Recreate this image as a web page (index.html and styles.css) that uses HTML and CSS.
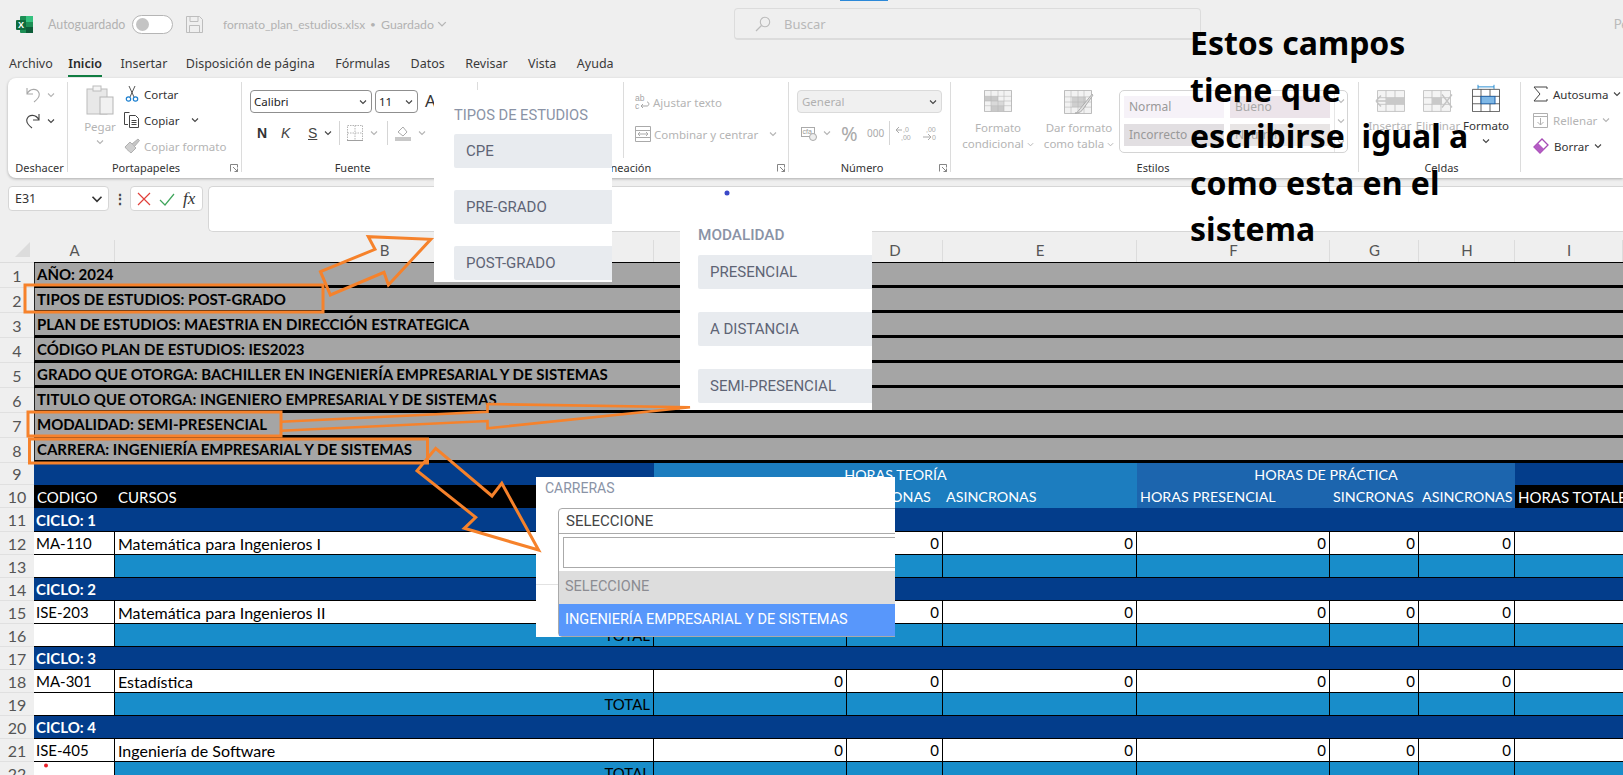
FILE: index.html
```html
<!DOCTYPE html>
<html lang="es">
<head>
<meta charset="utf-8">
<title>formato_plan_estudios.xlsx</title>
<link rel="stylesheet" href="styles.css">
</head>
<body>
<svg class="defs" width="0" height="0">
  <symbol id="chev" viewBox="0 0 8 8"><polyline points="1,2.5 4,5.5 7,2.5" fill="none" stroke="currentColor" stroke-width="1.1"/></symbol>
  <symbol id="launch" viewBox="0 0 8 8"><path d="M.5 7.5V.5h7v3M3 3l4.5 4.5M7.5 4.5v3h-3" fill="none" stroke="currentColor" stroke-width=".9"/></symbol>
</svg>

<header class="titlebar">
  <svg class="xl" width="17" height="17" viewBox="0 0 17 17"><rect x="4" y="0" width="13" height="17" rx="1" fill="#1d8f55"/><rect x="10" y="0" width="7" height="6" fill="#35c27f"/><rect x="10" y="11" width="7" height="6" fill="#0d5c38"/><rect x="0" y="4" width="10" height="10" rx="1" fill="#0f6b3c"/><text x="5" y="12" font-size="9" font-weight="700" text-anchor="middle" fill="#fff" font-family="Liberation Sans">X</text></svg>
  <span class="t-auto">Autoguardado</span>
  <span class="toggle"><span class="knob"></span></span>
  <svg class="save" width="17" height="17" viewBox="0 0 17 17"><path d="M.5.5h13l3 3v13H.5zM4 .5v5h8v-5M3.5 16.5v-7h10v7" fill="none" stroke="#bdbdbd"/></svg>
  <span class="t-file">formato_plan_estudios.xlsx</span>
  <span class="t-dot">•</span>
  <span class="t-saved">Guardado</span>
  <svg class="t-chev" width="10" height="10"><use href="#chev"/></svg>
  <div class="search">
    <svg width="16" height="16" viewBox="0 0 16 16"><circle cx="10" cy="6" r="4.7" fill="none" stroke="#bbb" stroke-width="1.1"/><path d="M6.5 9.5L1 15" stroke="#bbb" stroke-width="1.2"/></svg>
    <span>Buscar</span>
  </div>
  <span class="t-user">Pe</span>
  <span class="topmark"></span>
</header>

<nav class="tabs">
  <span>Archivo</span><span class="active">Inicio</span><span class="tight">Insertar</span><span class="tight">Disposición de página</span><span>Fórmulas</span><span>Datos</span><span>Revisar</span><span>Vista</span><span>Ayuda</span>
</nav>

<section class="ribbon">
  <div class="group g-undo">
    <div class="gbody stack">
      <div class="row"><svg width="16" height="16" viewBox="0 0 16 16"><path d="M2 1v6h6M2 7C5 1 12 1 14 6c1 3-1 6-5 9" fill="none" stroke="#a8a8a8" stroke-width="1.1"/></svg><svg class="mini dis" width="8" height="8"><use href="#chev"/></svg></div>
      <div class="row"><svg width="16" height="16" viewBox="0 0 16 16"><path d="M14 1v6H8M14 7C11 1 4 1 2 6c-1 3 1 6 5 9" fill="none" stroke="#444" stroke-width="1.1"/></svg><svg class="mini" width="8" height="8"><use href="#chev"/></svg></div>
    </div>
    <div class="glabel"><span class="lbl">Deshacer</span></div>
  </div>

  <div class="group g-clip">
    <div class="gbody split">
      <div class="bigbtn paste dis">
        <svg width="28" height="30" viewBox="0 0 28 30"><rect x="1" y="4" width="20" height="25" fill="#e8e8e8" stroke="#bcbcbc"/><rect x="7" y="1" width="8" height="5" fill="#f4f4f4" stroke="#bcbcbc"/><rect x="14" y="12" width="13" height="17" fill="#f1f1f1" stroke="#b5b5b5"/></svg>
        <span>Pegar</span>
        <svg class="mini" width="8" height="8"><use href="#chev"/></svg>
      </div>
      <div class="stack">
        <div class="row"><svg width="16" height="16" viewBox="0 0 16 16"><path d="M5 0l5 11M11 0L6 11" stroke="#555" fill="none"/><circle cx="4.5" cy="13" r="2.2" fill="none" stroke="#1b7fcf" stroke-width="1.2"/><circle cx="11.5" cy="13" r="2.2" fill="none" stroke="#1b7fcf" stroke-width="1.2"/></svg><span>Cortar</span></div>
        <div class="row"><svg width="16" height="16" viewBox="0 0 16 16"><path d="M4 12.500H.5v-12h5M5.500 3.500h6l3 3v9h-9z" fill="none" stroke="#444"/><path d="M7.500 8.500h5M7.500 10.500h5M7.500 12.500h5" stroke="#444"/></svg><span>Copiar</span><svg class="mini m-copy" width="8" height="8"><use href="#chev"/></svg></div>
        <div class="row dis"><svg width="16" height="16" viewBox="0 0 16 16"><path d="M1 9l5-5 6 6-5 5c-2-2-4-3-6-6z" fill="#cfcfcf" stroke="#b0b0b0"/><path d="M8 6l6-5 1.500 1.500-5 6" fill="#c5c5c5" stroke="#b0b0b0"/></svg><span>Copiar formato</span></div>
      </div>
    </div>
    <div class="glabel"><span></span><span class="lbl">Portapapeles</span><svg class="launch" width="8" height="8"><use href="#launch"/></svg></div>
  </div>

  <div class="group g-font">
    <div class="gbody stack">
      <div class="row r-sel">
        <div class="sel s-font"><span>Calibri</span><svg class="mini" width="8" height="8"><use href="#chev"/></svg></div>
        <div class="sel s-size"><span>11</span><svg class="mini" width="8" height="8"><use href="#chev"/></svg></div>
        <span class="bigA">A</span>
      </div>
      <div class="row r-fmt">
        <b class="fb">N</b><i class="fi">K</i><u class="fu">S</u><svg class="mini" width="8" height="8"><use href="#chev"/></svg>
        <span class="vsep"></span>
        <svg class="dis-ic" width="16" height="16" viewBox="0 0 16 16"><path d="M.5.500h15v15H.5zM8 .5v15M.5 8h15" fill="none" stroke="#b5b5b5" stroke-dasharray="1.500 1"/><path d="M0 15.500h16" stroke="#a0a0a0"/></svg><svg class="mini dis" width="8" height="8"><use href="#chev"/></svg>
        <span class="vsep"></span>
        <svg class="dis-ic" width="16" height="16" viewBox="0 0 16 16"><path d="M3 7l5-5 4 5-4 4z" fill="none" stroke="#aaa"/><rect x="0" y="12" width="16" height="4" fill="#c8c8c8"/></svg><svg class="mini dis" width="8" height="8"><use href="#chev"/></svg>
      </div>
    </div>
    <div class="glabel"><span class="lbl">Fuente</span></div>
  </div>

  <div class="group g-align">
    <div class="gbody split">
      <div class="align-left"></div>
      <div class="stack dis align-right">
        <div class="row"><svg width="15" height="16" viewBox="0 0 15 16"><text x="0" y="7" font-size="8.500" fill="#a5a5a5" font-family="Liberation Sans">ab</text><text x="0" y="15" font-size="8.500" fill="#a5a5a5" font-family="Liberation Sans">c</text><path d="M6 12h6c2.500 0 2.500-4 0-4M6 12l2-2M6 12l2 2" fill="none" stroke="#a5a5a5"/></svg><span>Ajustar texto</span></div>
        <div class="row"><svg width="16" height="16" viewBox="0 0 16 16"><path d="M.5.500h15v15H.5zM.5 4.500h15M.5 11.500h15M3 8h10M3 8l2-2M3 8l2 2M13 8l-2-2M13 8l-2 2" fill="none" stroke="#aaa"/></svg><span>Combinar y centrar</span><svg class="mini m-merge" width="8" height="8"><use href="#chev"/></svg></div>
      </div>
    </div>
    <div class="glabel"><span></span><span class="lbl">Alineación</span><svg class="launch" width="8" height="8"><use href="#launch"/></svg></div>
  </div>

  <div class="group g-num">
    <div class="gbody stack">
      <div class="row r-sel"><div class="sel s-general"><span>General</span><svg class="mini" width="8" height="8"><use href="#chev"/></svg></div></div>
      <div class="row r-num dis">
        <svg width="16" height="16" viewBox="0 0 16 16"><rect x=".5" y="2.500" width="13" height="9" fill="none" stroke="#aaa"/><text x="1.500" y="9" font-size="7" fill="#999" font-family="Liberation Sans">cfa</text><ellipse cx="12" cy="12" rx="3.500" ry="3.500" fill="#eee" stroke="#aaa"/></svg>
        <svg class="mini" width="8" height="8"><use href="#chev"/></svg>
        <span class="pct">%</span><span class="thou">000</span><span class="vsep"></span>
        <svg width="16" height="16" viewBox="0 0 16 16"><text x="7" y="7" font-size="7" fill="#aaa" font-family="Liberation Sans">,0</text><text x="5" y="15" font-size="7" fill="#aaa" font-family="Liberation Sans">,00</text><path d="M0 5h6M0 5l3-3M0 5l3 3" fill="none" stroke="#aaa"/></svg>
        <svg width="16" height="16" viewBox="0 0 16 16"><text x="4" y="7" font-size="7" fill="#aaa" font-family="Liberation Sans">,00</text><text x="10" y="15" font-size="7" fill="#aaa" font-family="Liberation Sans">0</text><path d="M1 12h8M9 12l-3-3M9 12l-3 3" fill="none" stroke="#aaa"/></svg>
      </div>
    </div>
    <div class="glabel"><span></span><span class="lbl">Número</span><svg class="launch" width="8" height="8"><use href="#launch"/></svg></div>
  </div>

  <div class="group g-style">
    <div class="gbody split">
      <div class="bigbtn b-fmt dis">
        <svg width="28" height="22" viewBox="0 0 28 28" preserveAspectRatio="none"><path d="M.5.500h27v27H.5z" fill="#f2f2f2" stroke="#b5b5b5"/><rect x="1" y="8" width="13" height="6" fill="#c9c9c9"/><rect x="7" y="14" width="13" height="6" fill="#d9d9d9"/><rect x="7" y="20" width="13" height="7" fill="#c9c9c9"/><path d="M.5 8h27M.5 14h27M.5 20h27M7 .5v27M14 .5v27M20 .5v27" fill="none" stroke="#b5b5b5" stroke-width=".6"/></svg>
        <span>Formato<br>condicional <svg class="mini" width="7" height="7"><use href="#chev"/></svg></span>
      </div>
      <div class="bigbtn b-tbl dis">
        <svg width="30" height="24" viewBox="0 0 30 28" preserveAspectRatio="none"><path d="M.5.500h27v27H.5z" fill="#f2f2f2" stroke="#b5b5b5"/><rect x="8" y="8" width="14" height="12" fill="#cfcfcf"/><path d="M.5 8h27M.5 14h27M.5 20h27M7 .5v27M14 .5v27M20 .5v27" fill="none" stroke="#b5b5b5" stroke-width=".6"/><path d="M11 27c3 0 3-3 5-5L28 5l1 1-11 18c-2 2-4 3-7 3z" fill="#e0e0e0" stroke="#a8a8a8"/></svg>
        <span>Dar formato<br>como tabla <svg class="mini" width="7" height="7"><use href="#chev"/></svg></span>
      </div>
      <div class="gallery">
        <div class="gal-grid">
          <span class="cs-normal">Normal</span><span class="cs-good">Bueno</span><span class="cs-bad">Incorrecto</span><span class="cs-neutral">Neutral</span>
        </div>
        <div class="gal-scroll"><svg class="mini" width="8" height="8"><use href="#chev"/></svg><svg class="mini" width="8" height="8"><use href="#chev"/></svg><svg class="mini" width="8" height="8"><use href="#chev"/></svg></div>
      </div>
    </div>
    <div class="glabel"><span class="lbl">Estilos</span></div>
  </div>

  <div class="group g-cells">
    <div class="gbody split">
      <div class="bigbtn cellbtn dis">
        <svg width="30" height="22" viewBox="0 4 30 20" preserveAspectRatio="none"><path d="M2.500 4.500h27v19h-27zM2.500 11h27M2.500 17h27M11 4.500v19M20 4.500v19" fill="#f4f4f4" stroke="#bdbdbd" stroke-width=".8"/><rect x="11" y="11" width="18" height="6" fill="#c9c9c9"/><path d="M1 14h10M1 14l5-5M1 14l5 5" fill="none" stroke="#c4c4c4" stroke-width="1.400"/></svg>
        <span>Insertar</span>
      </div>
      <div class="bigbtn cellbtn dis">
        <svg width="30" height="22" viewBox="0 4 30 20" preserveAspectRatio="none"><path d="M.5 4.500h27v19H.5zM.5 11h27M.5 17h27M9 4.500v19M18 4.500v19" fill="#f4f4f4" stroke="#bdbdbd" stroke-width=".8"/><rect x="9" y="11" width="10" height="6" fill="#c9c9c9"/><path d="M19 8l10 12M29 8L19 20" fill="none" stroke="#c4c4c4" stroke-width="1.400"/></svg>
        <span>Eliminar</span>
      </div>
      <div class="bigbtn cellbtn c-fmt">
        <svg width="28" height="28" viewBox="0 0 28 34" preserveAspectRatio="none"><path d="M6 3.500h16M6 1v5M22 1v5" stroke="#1b87d0" fill="none"/><path d="M.5 6.500h27v27H.5zM.5 15h27M.5 24h27M9 6.500v27M18 6.500v27" fill="#fff" stroke="#444" stroke-width=".9"/><rect x="9" y="15" width="14" height="9" fill="#7fb8e6" stroke="#1b5fa8"/></svg>
        <span>Formato</span>
        <svg class="mini" width="8" height="8"><use href="#chev"/></svg>
      </div>
    </div>
    <div class="glabel"><span class="lbl">Celdas</span></div>
  </div>

  <div class="group g-edit">
    <div class="gbody stack">
      <div class="row"><svg width="15" height="16" viewBox="0 0 15 16"><path d="M14 3V1H1l6 7-6 7h13v-2" fill="none" stroke="#444"/></svg><span>Autosuma</span><svg class="mini" width="8" height="8"><use href="#chev"/></svg></div>
      <div class="row dis"><svg width="15" height="16" viewBox="0 0 15 16"><path d="M.5 1.500h14v14H.5zM.5 4.500h14M7.500 6v7M4.500 10l3 3 3-3" fill="none" stroke="#b0b0b0"/></svg><span>Rellenar</span><svg class="mini" width="8" height="8"><use href="#chev"/></svg></div>
      <div class="row"><svg width="16" height="16" viewBox="0 0 16 16"><path d="M1 9l8-8 6 6-8 8z" fill="#fff" stroke="#a64cb5" stroke-width="1.300"/><path d="M1 9l4-4 6 6-4 4z" fill="#b45cc4"/></svg><span>Borrar</span><svg class="mini" width="8" height="8"><use href="#chev"/></svg></div>
    </div>
  </div>
</section>

<section class="fbar">
  <div class="namebox"><span>E31</span><svg width="12" height="12" viewBox="0 0 8 8"><use href="#chev"/></svg></div>
  <span class="fdots">⋮</span>
  <div class="fxbox">
    <svg width="14" height="14" viewBox="0 0 14 14"><path d="M1 1l12 12M13 1L1 13" stroke="#e0403a" stroke-width="1.200"/></svg>
    <svg width="16" height="14" viewBox="0 0 16 14"><path d="M1 8l5 5L15 2" fill="none" stroke="#3fa55b" stroke-width="1.200"/></svg>
    <span class="fx">fx</span>
  </div>
  <div class="finput"></div>
</section>

<table class="sheet">
  <colgroup><col class="c0"><col class="ca"><col class="cb"><col class="cc"><col class="cd"><col class="ce"><col class="cf"><col class="cg"><col class="ch"><col class="ci"></colgroup>
  <thead>
    <tr><th class="corner"><span class="tri"></span></th><th>A</th><th>B</th><th>C</th><th>D</th><th>E</th><th>F</th><th>G</th><th>H</th><th>I</th></tr>
  </thead>
  <tbody>
    <tr class="meta"><th>1</th><td colspan="9">AÑO: 2024</td></tr>
    <tr class="meta"><th>2</th><td colspan="9">TIPOS DE ESTUDIOS: POST-GRADO</td></tr>
    <tr class="meta"><th>3</th><td colspan="9">PLAN DE ESTUDIOS: MAESTRIA EN DIRECCIÓN ESTRATEGICA</td></tr>
    <tr class="meta"><th>4</th><td colspan="9">CÓDIGO PLAN DE ESTUDIOS: IES2023</td></tr>
    <tr class="meta"><th>5</th><td colspan="9">GRADO QUE OTORGA: BACHILLER EN INGENIERÍA EMPRESARIAL Y DE SISTEMAS</td></tr>
    <tr class="meta"><th>6</th><td colspan="9">TITULO QUE OTORGA: INGENIERO EMPRESARIAL Y DE SISTEMAS</td></tr>
    <tr class="meta"><th>7</th><td colspan="9">MODALIDAD: SEMI-PRESENCIAL</td></tr>
    <tr class="meta"><th>8</th><td colspan="9">CARRERA: INGENIERÍA EMPRESARIAL Y DE SISTEMAS</td></tr>
    <tr class="h9"><th>9</th><td colspan="2" class="navy"></td><td colspan="3" class="hteo mid">HORAS TEORÍA</td><td colspan="3" class="hpra mid">HORAS DE PRÁCTICA</td><td class="navy"></td></tr>
    <tr class="h10"><th>10</th><td class="blk">CODIGO</td><td class="blk">CURSOS</td><td class="hteo">HORAS PRESENCIAL</td><td class="hteo">SINCRONAS</td><td class="hteo">ASINCRONAS</td><td class="hpra">HORAS PRESENCIAL</td><td class="hpra">SINCRONAS</td><td class="hpra">ASINCRONAS</td><td class="blk">HORAS TOTALES</td></tr>

    <tr class="cyc first"><th>11</th><td colspan="9">CICLO: 1</td></tr>
    <tr class="crs"><th>12</th><td>MA-110</td><td>Matemática para Ingenieros I</td><td>0</td><td>0</td><td>0</td><td>0</td><td>0</td><td>0</td><td></td></tr>
    <tr class="tot"><th>13</th><td></td><td>TOTAL</td><td></td><td></td><td></td><td></td><td></td><td></td><td></td></tr>
    <tr class="cyc"><th>14</th><td colspan="9">CICLO: 2</td></tr>
    <tr class="crs"><th>15</th><td>ISE-203</td><td>Matemática para Ingenieros II</td><td>0</td><td>0</td><td>0</td><td>0</td><td>0</td><td>0</td><td></td></tr>
    <tr class="tot"><th>16</th><td></td><td>TOTAL</td><td></td><td></td><td></td><td></td><td></td><td></td><td></td></tr>
    <tr class="cyc"><th>17</th><td colspan="9">CICLO: 3</td></tr>
    <tr class="crs"><th>18</th><td>MA-301</td><td>Estadística</td><td>0</td><td>0</td><td>0</td><td>0</td><td>0</td><td>0</td><td></td></tr>
    <tr class="tot"><th>19</th><td></td><td>TOTAL</td><td></td><td></td><td></td><td></td><td></td><td></td><td></td></tr>
    <tr class="cyc"><th>20</th><td colspan="9">CICLO: 4</td></tr>
    <tr class="crs"><th>21</th><td>ISE-405</td><td>Ingeniería de Software</td><td>0</td><td>0</td><td>0</td><td>0</td><td>0</td><td>0</td><td></td></tr>
    <tr class="tot"><th>22</th><td></td><td>TOTAL</td><td></td><td></td><td></td><td></td><td></td><td></td><td></td></tr>
  </tbody>
</table>

<aside class="panel p-tipos">
  <div class="ptitle">TIPOS DE ESTUDIOS</div>
  <div class="pitem">CPE</div>
  <div class="pitem">PRE-GRADO</div>
  <div class="pitem">POST-GRADO</div>
</aside>

<aside class="panel p-moda">
  <div class="ptitle">MODALIDAD</div>
  <div class="pitem">PRESENCIAL</div>
  <div class="pitem">A DISTANCIA</div>
  <div class="pitem">SEMI-PRESENCIAL</div>
</aside>

<aside class="panel p-carr">
  <div class="ptitle">CARRERAS</div>
  <span class="p-rule"></span>
  <div class="dd">
    <div class="dd-head">SELECCIONE</div>
    <div class="dd-search"><div class="dd-input"></div></div>
    <div class="dd-opt o-grey">SELECCIONE</div>
    <div class="dd-opt o-sel">INGENIERÍA EMPRESARIAL Y DE SISTEMAS</div>
  </div>
</aside>

<svg class="marks" width="1623" height="775" viewBox="0 0 1623 775">
  <g class="ol">
    <rect x="25" y="285" width="298" height="27"/>
    <rect x="28" y="412" width="253" height="24"/>
    <rect x="29.500" y="439" width="398" height="24"/>
    <path d="M320.500 271.700L375 249.300 368.300 236.700 430.800 239.300 388.400 285 384 272.300 330.400 295z"/>
    <path class="thin" d="M281 421.700L487.500 411.700 487.500 404 690 407.300 487.500 428.300 487.500 421 281 430.700"/>
    <path d="M435.700 448.300L492 496 501.800 483.300 538.600 550 464.300 528.300 475.700 517.300 417 470.700z"/>
  </g>
  <circle cx="727" cy="193" r="2.500" fill="#3a48c8"/>
  <circle cx="46" cy="765.500" r="2" fill="#e8202a"/>
</svg>

<div class="note">Estos campos<br>tiene que<br>escribirse  igual a<br>como esta en el<br>sistema</div>
</body>
</html>
```

FILE: styles.css
```css
* { box-sizing: border-box; }
html, body { margin: 0; padding: 0; }
body {
  width: 1623px; height: 775px; overflow: hidden; position: relative;
  background: #efefef; color: #333;
  font-family: "Noto Sans", "Open Sans", sans-serif; font-size: 11.500px;
}
.defs { position: absolute; }
svg { display: block; flex: none; }

/* title bar */
.titlebar { height: 48px; display: flex; align-items: center; color: #b2b2b2; position: relative; font-family: Lato, "Noto Sans", sans-serif; }
.xl { margin-left: 16px; }
.t-auto { margin-left: 15px; font-size: 12.400px; width: 84px; white-space: nowrap; }
.toggle { width: 41px; height: 19px; border: 1px solid #b5b5b5; border-radius: 10px; background: #fff; display: flex; align-items: center; padding-left: 3px; }
.knob { width: 13px; height: 13px; border-radius: 50%; background: #c4c4c4; }
.save { margin-left: 13px; }
.t-file { margin-left: 20px; font-size: 12px; width: 145px; white-space: nowrap; }
.t-dot { margin-left: 2px; font-size: 10px; width: 11px; }
.t-saved { margin-left: 0; font-size: 12.300px; width: 53px; }
.t-chev { color: #b5b5b5; margin-left: 3px; }
.search { margin-left: 287px; width: 467px; height: 32px; border: 1px solid #dcdcdc; border-bottom-width: 2px; border-radius: 4px; display: flex; align-items: center; padding-left: 20px; gap: 13px; font-size: 13px; color: #b8b8b8; font-family: "Noto Sans", sans-serif; }
.t-user { margin-left: auto; margin-right: -5px; font-size: 13px; color: #bbb; }
.topmark { position: absolute; left: 840px; top: 0; width: 48px; height: 1px; background: #2b88d8; }

/* tabs */
.tabs { height: 30px; display: flex; align-items: center; gap: 20.500px; padding-left: 9px; font-size: 12.500px; color: #3a3a3a; }
.tabs span { position: relative; white-space: nowrap; }
.tabs .active { font-weight: 600; color: #2a2a2a; margin-left: -5px; }
.tabs .tight { margin-left: -2px; }
.tabs .active::after { content: ""; position: absolute; left: 0; right: 0; bottom: -5px; height: 2px; background: #107c41; }

/* ribbon */
.ribbon { height: 100px; margin-left: 8px; background: #fff; border-radius: 8px 0 0 8px; box-shadow: 0 1px 3px rgba(0,0,0,.28); display: flex; padding-top: 4px; }
.group { height: 90px; border-right: 1px solid #dcdcdc; display: flex; flex-direction: column; flex: none; }
.gbody { flex: 1; min-height: 0; }
.stack { display: flex; flex-direction: column; }
.split { display: flex; }
.row { height: 26px; display: flex; align-items: center; gap: 4px; white-space: nowrap; flex: none; }
.glabel { height: 14px; line-height: 14px; margin-bottom: -3px; display: grid; grid-template-columns: 1fr auto 1fr; align-items: center; padding-right: 3px; color: #333; font-size: 11px; }
.glabel .lbl { grid-column: 2; text-align: center; }
.launch { justify-self: end; color: #777; }
.mini { color: #444; flex: none; }
.dis, .dis .mini, .mini.dis { color: #b4b4b4; }
.r-sel { height: 31px; align-items: flex-start; padding-top: 8px; gap: 3px; }

.g-undo { width: 60px; }
.g-undo .gbody { padding-left: 17px; }
.g-undo .row { gap: 6px; }
.g-undo .glabel { display: flex; justify-content: center; padding: 0 0 0 4px; }
.g-clip { width: 174px; }
.g-clip .stack { margin-top: -1px; }
.g-clip .lbl { margin-right: 14px; }
.paste { width: 36px; margin-left: 14px; margin-right: 6px; padding-top: 3px; }
.bigbtn { display: flex; flex-direction: column; align-items: center; text-align: center; line-height: 16px; white-space: nowrap; }
.paste span { margin-top: 4px; }
.paste .mini { margin-top: 3px; }
.g-clip .row { gap: 4px; }
.m-copy { margin-left: 8px; }
.g-font { width: 236px; padding-left: 8px; }
.g-font .glabel { display: flex; justify-content: center; padding-right: 22px; }
.sel { height: 23px; border: 1px solid #8f8f8f; border-radius: 4px; background: #fff; display: flex; align-items: center; justify-content: space-between; padding: 0 4px 0 3px; color: #222; }
.s-font { width: 122px; }
.s-size { width: 43px; }
.bigA { font-size: 17px; margin-left: 4px; line-height: 22px; }
.r-fmt { gap: 0; margin-top: 7px; padding-left: 7px; }
.fb { font-size: 14px; width: 24px; color: #333; font-family: "Liberation Sans", sans-serif; }
.fi { font-size: 14px; width: 27px; color: #444; font-family: "Liberation Sans", sans-serif; }
.fu { font-size: 14px; width: 16px; color: #444; font-family: "Liberation Sans", sans-serif; }
.vsep { width: 1px; height: 24px; background: #d5d5d5; margin: 0 7px; flex: none; }
.dis-ic + .mini { margin-left: 7px; margin-right: 2px; }
.g-align { width: 311px; }
.g-align .lbl { margin-right: 14px; }
.align-left { width: 146px; height: 76px; border-right: 1px solid #dcdcdc; }
.align-right { padding: 4px 0 0 11px; }
.align-right .row { gap: 3px; height: 32px; }
.m-merge { margin-left: 8px; }
.g-num { width: 162px; padding-left: 8px; }
.g-num .lbl { margin-right: 20px; }
.s-general { width: 145px; background: #f0f0f0; border-color: #dadada; color: #b0b0b0; padding-left: 4px; }
.r-num { gap: 0; margin-top: 7px; padding-left: 4px; }
.r-num .mini { margin: 0 10px 0 6px; }
.pct { font-size: 20px; width: 26px; color: #aaa; }
.thou { font-size: 10px; width: 22px; color: #aaa; }
.r-num .vsep { margin: 0 6px 0 0; }
.r-num svg + svg { margin-left: 10px; }
.r-num .vsep + svg { margin-left: 0; }
.g-style { width: 408px; }
.b-fmt { width: 82px; margin-left: 6px; padding-top: 8px; }
.b-tbl { width: 80px; padding-top: 8px; }
.bigbtn .mini { display: inline-block; vertical-align: middle; }
.b-fmt span { margin-top: 8px; }
.b-tbl span { margin-top: 6px; }
.gallery { width: 229px; height: 63px; margin-top: 8px; border: 1px solid #d4d4d4; border-radius: 5px; display: flex; }
.gal-grid { width: 214px; display: grid; grid-template-columns: 100px 100px; column-gap: 6px; row-gap: 6px; padding: 5px 0 0 4px; grid-auto-rows: 22px; }
.gal-grid span { padding-left: 5px; line-height: 22px; font-size: 12px; color: #a8a8a8; overflow: hidden; }
.cs-normal { background: #f6f2f8; color: #999 !important; }
.cs-good { background: #ece4ea; }
.cs-bad { background: #e2dfe2; color: #999 !important; }
.cs-neutral { background: #e8e5e5; }
.gal-scroll { flex: 1; display: flex; flex-direction: column; justify-content: space-around; align-items: center; border-left: 1px solid #e6e6e6; }
.gal-scroll .mini { color: #bbb; }
.g-cells { width: 162px; padding-left: 7px; }
.cellbtn { width: 48px; padding-top: 8px; }
.cellbtn span { margin-top: 6px; }
.c-fmt { padding-top: 2px; color: #333; }
.c-fmt span { margin-top: 6px; }
.c-fmt .mini { margin-top: 3px; }
.g-edit { flex: 1; border-right: 0; padding-left: 12px; }
.g-edit .row { gap: 5px; }
.g-edit .stack { margin-top: -1px; }

/* formula bar */
.fbar { height: 54px; display: flex; padding: 8px 0 0 8px; align-items: flex-start; }
.namebox { width: 101px; height: 25px; background: #fff; border: 1px solid #d6d6d6; border-radius: 4px; display: flex; align-items: center; justify-content: space-between; padding: 0 5px 0 6px; font-size: 12.500px; color: #333; }
.fdots { width: 21px; text-align: center; font-size: 14px; line-height: 25px; font-weight: 700; color: #444; }
.fxbox { width: 73px; height: 25px; background: #fff; border: 1px solid #d6d6d6; border-radius: 4px; display: flex; align-items: center; gap: 8px; padding-left: 6px; }
.fx { font-family: "Liberation Serif", serif; font-style: italic; font-size: 17px; color: #333; }
.finput { flex: 1; height: 46px; margin-left: 5px; background: #fff; border: 1px solid #d6d6d6; border-right: 0; border-radius: 5px 0 0 5px; }

/* sheet */
.sheet { width: 1623px; table-layout: fixed; border-collapse: separate; border-spacing: 0; font-family: Lato, "Liberation Sans", sans-serif; font-size: 15px; color: #000; }
.c0 { width: 34px; } .ca { width: 81px; } .cb { width: 539px; } .cc { width: 193px; } .cd { width: 96px; }
.ce { width: 194px; } .cf { width: 193px; } .cg { width: 89px; } .ch { width: 96px; } .ci { width: 108px; }
.sheet th { font-weight: 400; color: #555; background: #efefef; padding: 0; }
.sheet thead tr { height: 31px; }
.sheet thead th { padding-top: 6px; border-bottom: 1px solid #000; font-size: 15px; background: #efefef linear-gradient(#dcdcdc, #dcdcdc) right bottom / 1px 22px no-repeat; }
.sheet thead .corner { background: #efefef; border-bottom: 1px solid #dcdcdc; position: relative; padding: 0; }
.tri { display: block; width: 0; height: 0; border-style: solid; border-width: 0 0 15px 15px; border-color: transparent transparent #dcdcdc transparent; margin: 5px 0 0 15px; }
.sheet tbody th { border-bottom: 1px solid #e0e0e0; font-size: 16px; }
.sheet td { padding: 0 3px; white-space: nowrap; overflow: hidden; }
.meta { height: 25px; }
.meta td { background: #a5a5a5; border-bottom: 3px solid #000; border-left: 1px solid #222; font-weight: 700; padding-left: 2px; font-size: 15px; }
.h9 { height: 22px; } .h10 { height: 23px; }
.h9 td, .h10 td { color: #fff; padding-left: 3px; font-size: 14.300px; }
.h10 .blk { font-size: 15px; }
.navy { background: #033d8b; }
.blk { background: #000; }
.hteo { background: #1c7dbf; }
.hpra { background: #1c65ae; }
.mid { text-align: center; }
.cyc { height: 23px; }
.cyc.first { height: 24px; }
.cyc td { background: #033d8b; color: #fff; font-weight: 700; border-bottom: 1px solid #000; padding-left: 2px; }
.crs { height: 23px; }
.tot { height: 23px; }
.crs td { background: #fff; border-bottom: 1px solid #000; border-right: 1px solid #000; text-align: right; }
.crs td:nth-child(2) { text-align: left; padding-left: 2px; }
.crs td:nth-child(3) { text-align: left; font-size: 16px; }
.tot td { background: #188dca; border-bottom: 1px solid #000; border-right: 1px solid #000; text-align: right; }
.tot td:nth-child(2) { background: #fff; }
.tot td:last-child, .crs td:last-child { border-right: 0; }

/* overlays */
.panel { position: absolute; background: #fff; overflow: hidden; font-family: Roboto, "Noto Sans", sans-serif; }
.ptitle { color: #8a93a6; font-size: 14.700px; line-height: 18px; white-space: nowrap; }
.pitem { background: #e8ebef; color: #5e6475; font-size: 15px; display: flex; align-items: center; padding-left: 12px; white-space: nowrap; border-radius: 2px 0 0 2px; }
.p-tipos { left: 434px; top: 90px; width: 178px; height: 192px; padding: 16px 0 0 20px; display: flex; flex-direction: column; gap: 22px; }
.p-tipos .ptitle { margin-bottom: -12px; }
.p-tipos .pitem { height: 34px; }
.p-moda { left: 680px; top: 226px; width: 192px; height: 184px; padding-left: 18px; display: flex; flex-direction: column; gap: 23px; }
.p-moda .ptitle { margin-bottom: -12px; font-size: 15.300px; font-weight: 500; }
.p-moda .pitem { height: 34px; }
.p-carr { left: 536px; top: 477px; width: 359px; height: 160px; padding: 2px 0 0 9px; }
.p-carr .ptitle { font-size: 14px; }
.p-rule { position: absolute; left: 0; top: 107px; width: 22px; height: 1px; background: #e2e2e2; }
.dd { position: absolute; left: 22px; top: 31px; width: 420px; height: 129px; border: 1px solid #aaa; border-radius: 4px; background: #fff; font-size: 15px; }
.dd-head { height: 25px; border-bottom: 1px solid #aaa; line-height: 24px; padding-left: 7px; color: #444; }
.dd-search { height: 37px; padding: 3px 0 0 4px; }
.dd-input { height: 31px; border: 1px solid #aaa; }
.dd-opt { height: 32px; line-height: 32px; padding-left: 6px; font-size: 14.500px; }
.o-grey { background: #ddd; color: #8c8c92; height: 33px; }
.o-sel { background: #5897fb; color: #fff; }
.marks { position: absolute; left: 0; top: 0; }
.ol { fill: none; stroke: #f6822b; stroke-width: 3; }
.ol .thin { stroke-width: 2.600; }
.note { position: absolute; left: 1190px; top: 20px; font-family: "Noto Sans", "Open Sans", sans-serif; font-weight: 700; font-size: 32px; line-height: 46.500px; color: #000; white-space: pre; }
```
